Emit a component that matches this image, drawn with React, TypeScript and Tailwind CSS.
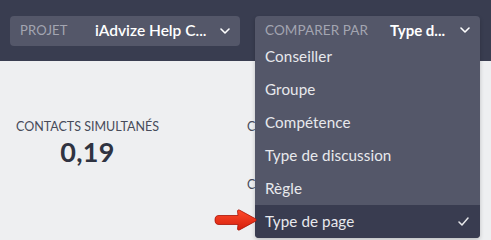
import React from "react";

const font = { fontFamily: "Lato, 'Open Sans', sans-serif" };

function Chevron() {
  return (
    <svg width="10" height="6" viewBox="0 0 10 6" fill="none">
      <path d="M1 1l4 4 4-4" stroke="#ffffff" strokeWidth="1.6" strokeLinecap="round" strokeLinejoin="round" />
    </svg>
  );
}

function Check() {
  return (
    <svg width="11" height="9" viewBox="0 0 11 9" fill="none">
      <path d="M1 5l3 3 6-7" stroke="#e6e7ea" strokeWidth="1.5" strokeLinecap="round" strokeLinejoin="round" />
    </svg>
  );
}

function Arrow() {
  return (
    <svg width="43" height="22" viewBox="0 0 43 22">
      <defs>
        <linearGradient id="ar" x1="0" y1="0" x2="0" y2="1">
          <stop offset="0" stopColor="#ff4a2a" />
          <stop offset="1" stopColor="#d41e0c" />
        </linearGradient>
      </defs>
      <path
        d="M1 11 C1 7.6 2.5 6.5 5 6.5 L24 6.5 L23.5 2 C23.5 1 24.5 0.6 25.5 1.1 L41.5 9.8 C42.5 10.4 42.5 11.6 41.5 12.2 L25.5 20.9 C24.5 21.4 23.5 21 23.5 20 L24 15.5 L5 15.5 C2.5 15.5 1 14.4 1 11 Z"
        fill="url(#ar)"
        stroke="#a81306"
        strokeWidth="0.8"
      />
    </svg>
  );
}

const items = ["Conseiller", "Groupe", "Compétence", "Type de discussion", "Règle", "Type de page"];

export default function App() {
  return (
    <div className="w-[491px] h-[240px] overflow-hidden bg-[#eeeff1] relative" style={font}>
      <div className="h-[61px] bg-[#393d50] flex items-start pt-[16px] pl-[10px] gap-[15px]">
        <div className="w-[230px] h-[30px] rounded-[4px] bg-[#545769] flex items-center pl-[10px] pr-[10px]">
          <span className="text-[13px] text-[#a3a5b1] tracking-[0.2px] w-[75px]">PROJET</span>
          <span className="text-[15.5px] font-semibold text-white flex-1">iAdvize Help C...</span>
          <Chevron />
        </div>
        <div className="relative w-[225px] h-[30px]">
          <div className="absolute left-0 top-0 w-[225px] rounded-[4px] bg-[#545769] overflow-hidden shadow-[0_2px_4px_rgba(0,0,0,0.2)]">
            <div className="h-[24px] flex items-center pl-[10px] pr-[10px] pt-[4px]">
              <span className="text-[13.5px] text-[#a3a5b1] tracking-[0.1px] w-[125px]">COMPARER PAR</span>
              <span className="text-[15px] font-bold text-white flex-1">Type d...</span>
              <Chevron />
            </div>
            {items.map((it, i) => (
              <div
                key={it}
                className={
                  i === items.length - 1
                    ? "h-[33px] flex items-center justify-between pl-[10px] pr-[11px] pb-[1px] bg-[#393c50]"
                    : "h-[33px] flex items-center pl-[10px] pb-[2px]"
                }
              >
                <span className="text-[15.2px] text-[#e8e9ed] leading-[18px] tracking-[0.1px]">{it}</span>
                {i === items.length - 1 && <Check />}
              </div>
            ))}
          </div>
        </div>
      </div>
      <div className="flex pl-[14px] pt-[58px]">
        <div className="w-[233px] flex flex-col">
          <div className="w-[147px] flex flex-col items-center">
            <span className="text-[12.5px] text-[#474b5a] whitespace-nowrap leading-[16px]">CONTACTS SIMULTANÉS</span>
            <span className="text-[27px] font-bold text-[#2f3341] leading-[30px] mt-[2px] tracking-[0.3px]">0,19</span>
          </div>
        </div>
        <div className="flex flex-col">
          <span className="text-[12.5px] text-[#474b5a] whitespace-nowrap leading-[16px]">CONTACTS ENTRANTS TRAITÉS OO</span>
          <span className="text-[12.5px] text-[#474b5a] whitespace-nowrap leading-[16px] mt-[42px]">CONTACTS</span>
        </div>
      </div>
      <div className="absolute left-[214px] top-[209px]">
        <Arrow />
      </div>
    </div>
  );
}
